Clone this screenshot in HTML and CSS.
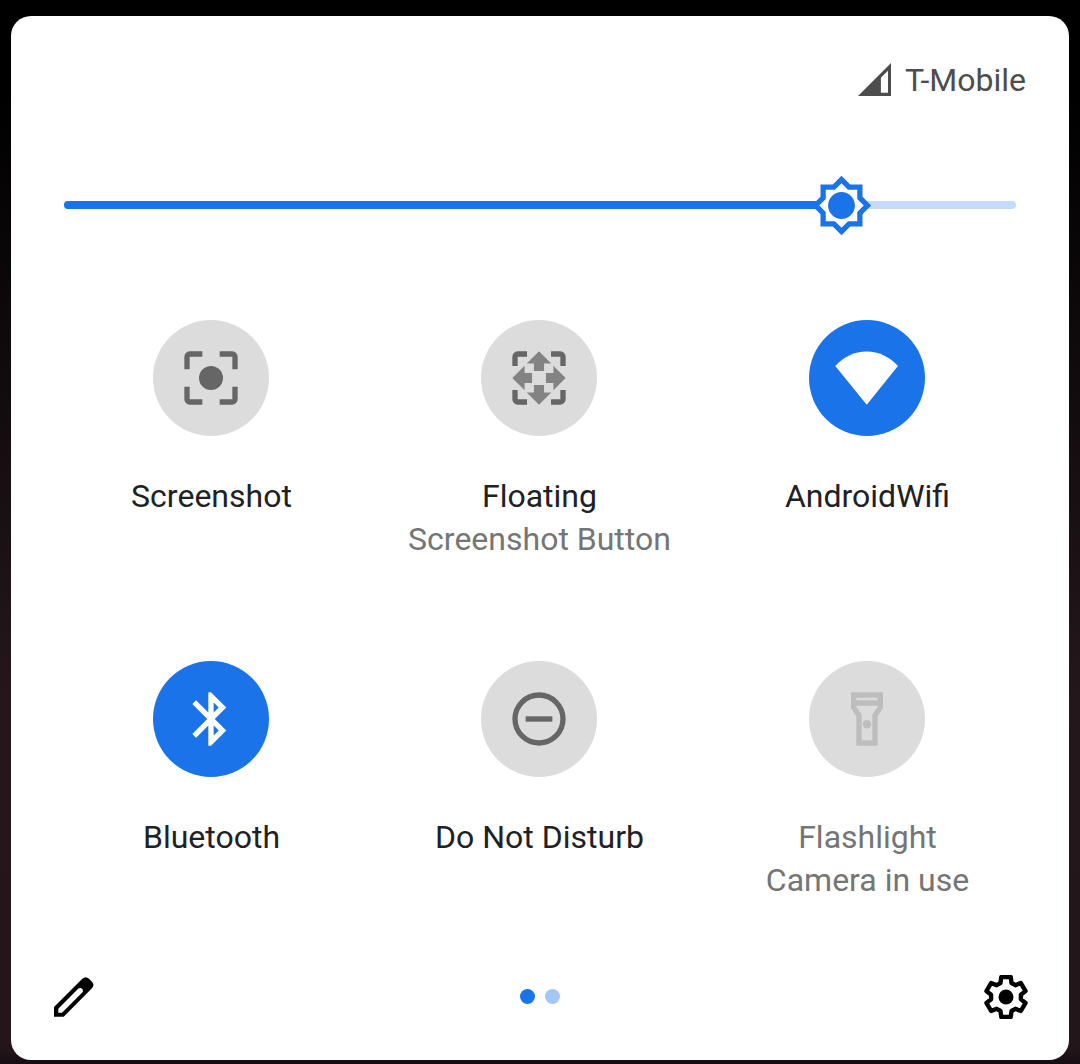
FILE: index.html
```html
<!DOCTYPE html>
<html lang="en">
<head>
<meta charset="utf-8">
<title>Quick settings</title>
<link rel="stylesheet" href="styles.css">
</head>
<body>
<main class="panel">
  <header class="status">
    <svg class="signal" viewBox="54 37 98 98"><path fill-rule="evenodd" d="M152 37V135H54ZM143 60L122 81V125H143Z"/></svg>
    <span class="carrier">T-Mobile</span>
  </header>

  <div class="slider">
    <div class="track"><div class="fill"></div></div>
    <svg class="thumb" viewBox="0 0 24 24">
      <path class="thumb-gap" d="M19 9V5h-4L12 2 9 5H5v4l-3 3 3 3v4h4l3 3 3-3h4v-4l3-3z"/>
      <path fill-rule="evenodd" d="M20 8.69V4h-4.69L12 .69 8.69 4H4v4.69L.69 12 4 15.31V20h4.69L12 23.31 15.31 20H20v-4.69L23.31 12zM18 14.48V18h-3.52L12 20.48 9.52 18H6v-3.52L3.52 12 6 9.52V6h3.52L12 3.52 14.48 6H18v3.52L20.48 12z"/>
      <circle cx="12" cy="12" r="5.1"/>
    </svg>
  </div>

  <section class="tiles">
    <div class="tile">
      <div class="disc"><svg class="icon" viewBox="0 0 24 24">
        <path class="line" d="M3 8.75V4a1 1 0 0 1 1-1h4.75M15.25 3H20a1 1 0 0 1 1 1v4.75M21 15.25V20a1 1 0 0 1-1 1h-4.75M8.75 21H4a1 1 0 0 1-1-1v-4.75"/>
        <circle cx="12" cy="12" r="4.5"/></svg></div>
      <div class="label">Screenshot</div>
    </div>
    <div class="tile">
      <div class="disc"><svg class="icon" viewBox="0 0 24 24">
        <path class="line" d="M3 7.5V4a1 1 0 0 1 1-1h3.5M16.5 3H20a1 1 0 0 1 1 1v3.5M21 16.5V20a1 1 0 0 1-1 1h-3.5M7.5 21H4a1 1 0 0 1-1-1v-3.5"/>
        <path class="soft" d="M12 2l4.6 4.6h-2.7v2.8h-3.8V6.6H7.4zM22 12l-4.6 4.6v-2.7h-2.8v-3.8h2.8V7.4zM12 22l-4.6-4.6h2.7v-2.8h3.8v2.8h2.7zM2 12l4.6-4.6v2.7h2.8v3.8H6.6v2.7z"/></svg></div>
      <div class="label">Floating</div>
      <div class="sub">Screenshot Button</div>
    </div>
    <div class="tile">
      <div class="disc on"><svg class="icon" viewBox="0 0 24 24"><path d="M11.9 22L.1 7.5A15.5 15.5 0 0 1 23.6 7.5Z"/></svg></div>
      <div class="label">AndroidWifi</div>
    </div>
    <div class="tile">
      <div class="disc on"><svg class="icon" viewBox="0 0 24 24"><path d="M17.71 7.71L12 2h-1v7.59L6.41 5 5 6.41 10.59 12 5 17.59 6.41 19 11 14.41V22h1l5.71-5.71-4.3-4.29 4.3-4.29zM13 5.83l1.88 1.88L13 9.59V5.83zm1.88 10.46L13 18.17v-3.76l1.88 1.88z"/></svg></div>
      <div class="label">Bluetooth</div>
    </div>
    <div class="tile">
      <div class="disc"><svg class="icon" viewBox="0 0 24 24"><circle class="line" cx="12" cy="12" r="9"/><path d="M7 11h10v2H7z"/></svg></div>
      <div class="label">Do Not Disturb</div>
    </div>
    <div class="tile unavailable">
      <div class="disc"><svg class="icon" viewBox="0 0 24 24"><path d="M18 2H6v6l2 3v11h8V11l2-3V2zm-2 2v1H8V4h8zm-2 6.4V20h-4v-9.6l-2-3V7h8v.4l-2 3z"/><circle cx="12" cy="14" r="1.6"/></svg></div>
      <div class="label">Flashlight</div>
      <div class="sub">Camera in use</div>
    </div>
  </section>

  <footer class="footer">
    <svg class="edit" viewBox="160 48 124 124"><path fill-rule="evenodd" d="M163 170V141L248 56Q258 47 268 56L277 65Q286 74 277 85L192 170ZM176 158H187L250 95L249 88L244 84L237 85L176 146Z"/></svg>
    <div class="pages"><span class="dot current"></span><span class="dot"></span></div>
    <svg class="settings" viewBox="-67.5 -67.5 135 135">
      <path class="gear" d="M-17-43L-14.5-61H14.5L17-43 28.7-36.2 45.5-43 60-18 45.7-6.8V6.8L60 18 45.5 43 28.7 36.2 17 43 14.5 61H-14.5L-17 43-28.7 36.2-45.5 43-60 18-45.7 6.8V-6.8L-60-18-45.5-43-28.7-36.2Z"/>
      <circle r="23"/></svg>
  </footer>
</main>
</body>
</html>
```
FILE: styles.css
```css
* { box-sizing: border-box; }
body {
  margin: 0;
  height: 1064px;
  padding: 16px 11px 4px;
  background: linear-gradient(#000 0, #000 90px, #24171c 700px, #22161b 1050px, #170c11 1064px);
  font-family: Roboto, sans-serif;
  font-size: 32px;
  line-height: 43px;
  color: #202124;
}
svg { display: block; flex: none; }
.panel {
  height: 1044px;
  border-radius: 20px;
  background: #fff;
  display: flex;
  flex-direction: column;
  overflow: hidden;
}
.status {
  height: 128px;
  padding-right: 43px;
  display: flex;
  justify-content: flex-end;
  align-items: center;
  gap: 14px;
  color: #4d4d4d;
}
.signal { width: 33px; height: 33px; margin-bottom: 2px; fill: #4d4d4d; }
.slider {
  position: relative;
  height: 122px;
  padding: 0 53px;
  display: flex;
  align-items: center;
}
.track { flex: 1; height: 8px; border-radius: 4px; background: #c6dbf9; overflow: hidden; }
.fill { width: 778px; height: 8px; background: #1a73e8; }
.thumb {
  position: absolute;
  left: 799px;
  top: 30px;
  width: 63px;
  height: 63px;
  fill: #1a73e8;
}
.thumb-gap { fill: #fff; }
.tiles {
  height: 651px;
  margin: 54px 38px 0 36px;
  display: grid;
  grid-template-columns: repeat(3, 328px);
  grid-template-rows: 341px 310px;
}
.tile { display: flex; flex-direction: column; align-items: center; }
.label, .sub { padding-left: 1px; }
.disc {
  width: 116px;
  height: 116px;
  margin-bottom: 39px;
  padding: 25.5px 26px;
  border-radius: 50%;
  background: #dcdcdc;
  fill: #666;
  stroke: none;
}
.disc.on { background: #1a73e8; fill: #fff; }
.icon { width: 64px; height: 64px; }
.line { fill: none; stroke: #666; stroke-width: 2; }
.soft { fill: #838383; }
.sub { color: #757575; }
.unavailable { color: #757575; }
.unavailable .disc { fill: #bdbdbd; }
.footer {
  height: 51px;
  padding: 0 41px 0 42px;
  display: flex;
  align-items: center;
  justify-content: space-between;
}
.edit { width: 41.3px; height: 41.3px; }
.pages { display: flex; gap: 10px; margin: 0 0 1px 2px; }
.dot { width: 15px; height: 15px; border-radius: 50%; background: #a3c7f6; }
.dot.current { background: #1a73e8; }
.settings { width: 44px; height: 44px; }
.gear { fill: none; stroke: #000; stroke-width: 13.5; stroke-linejoin: round; }
```
